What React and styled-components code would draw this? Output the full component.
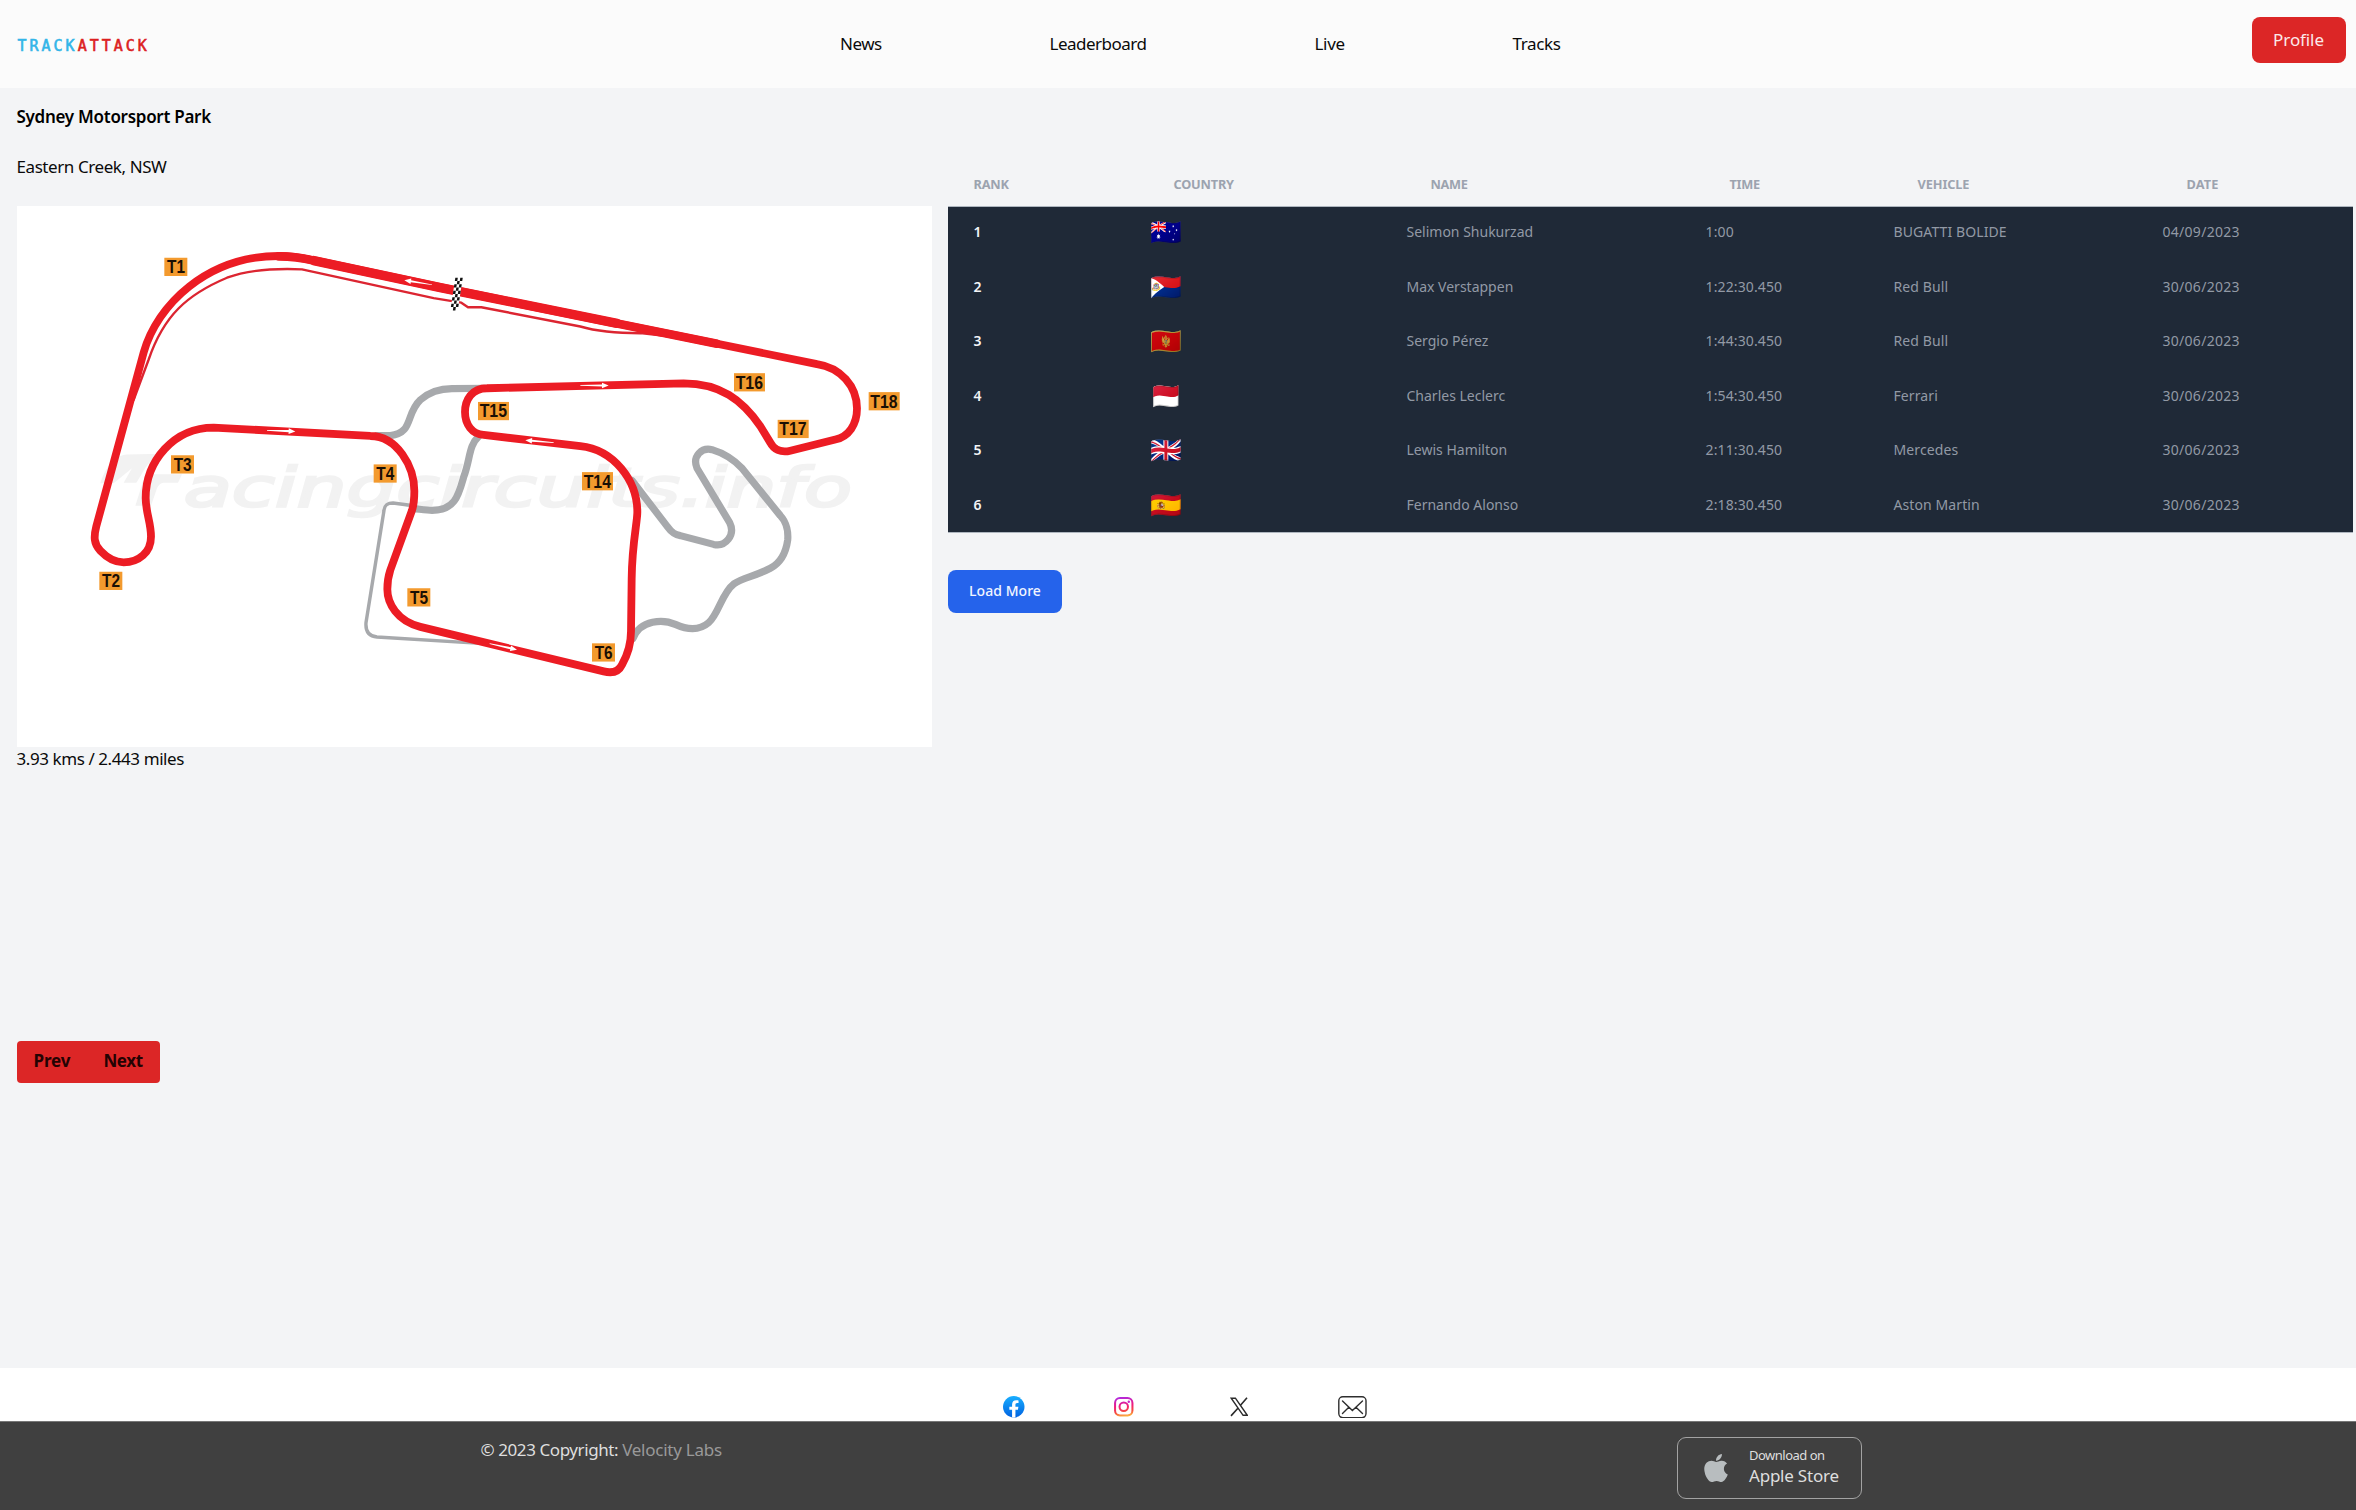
import React from "react";
import styled, { createGlobalStyle } from "styled-components";
import { FaApple } from "react-icons/fa";

const GlobalStyle = createGlobalStyle`
  * { box-sizing: border-box; }
  body { margin: 0; background: #f3f4f6; color: #0a0a0a; font: 17px/26px "Noto Sans", "Open Sans", sans-serif; letter-spacing: -0.42px; }
  button { font: inherit; letter-spacing: inherit; border: 0; padding: 0; cursor: pointer; }
  a { color: inherit; text-decoration: none; }
`;

const Page = styled.div`
  display: flex;
  flex-direction: column;
  height: 1510px;
  overflow: hidden;
`;

const Nav = styled.nav`
  display: flex;
  flex: none;
  height: 88px;
  padding: 17px 10.5px 0 17.5px;
  background: #fbfbfb;
`;

const Logo = styled.a`
  display: flex;
  width: 822.5px;
  padding-top: 16px;
  font: 400 15px/26px "DejaVu Sans Mono", monospace;
  letter-spacing: 3px;
  height: 44px;
  -webkit-text-stroke: 0.6px currentColor;
`;

const LogoPart = styled.span`
  color: ${(p) => p.$color};
`;

const NavLinks = styled.div`
  display: flex;
  flex: 1;
  padding-top: 14px;
`;

const NavLink = styled.a`
  width: ${(p) => p.$width}px;
  letter-spacing: ${(p) => p.$spacing}px;
`;

const ProfileButton = styled.button`
  width: 94px;
  height: 46px;
  padding-bottom: 1px;
  border-radius: 8px;
  background: #dc2626;
  color: #fbe9e9;
  letter-spacing: -0.1px;
`;

const Main = styled.main`
  display: flex;
  flex: none;
  height: 1280px;
`;

const TrackColumn = styled.section`
  display: flex;
  flex-direction: column;
  align-items: flex-start;
  width: 948px;
  padding: 16px 16.5px 0 16.5px;
`;

const TrackTitle = styled.h1`
  margin: 0 0 24px;
  font-size: 17px;
  font-weight: 600;
  letter-spacing: -0.28px;
  color: #000;
`;

const TrackPlace = styled.p`
  margin: 0 0 25.5px;
`;

const MapCard = styled.div`
  width: 915px;
  height: 541px;
  background: #fff;
  svg { display: block; width: 100%; height: 100%; }
`;

const TrackLength = styled.p`
  margin: -1px 0 269.5px;
`;

const Pager = styled.div`
  display: flex;
  gap: 33px;
  width: 143px;
  height: 41.5px;
  padding: 0 17px;
  border-radius: 4px;
  background: #dc2626;
`;

const PagerButton = styled.button`
  background: none;
  padding-bottom: 2px;
  color: #240303;
  font-weight: 700;
  letter-spacing: ${(p) => p.$spacing}px;
`;

const BoardColumn = styled.section`
  width: 1405px;
  padding-top: 75px;
`;

const Row = styled.div`
  display: grid;
  grid-template-columns: 176px 257px 299px 188px 269px 216px;
  align-items: center;
`;

const HeadRow = styled(Row)`
  height: 42.5px;
  color: #9ca3af;
  font-size: 12.75px;
  font-weight: 700;
  text-transform: uppercase;
`;

const HeadCell = styled.div`
  padding-left: ${(p) => (p.$first ? 25.5 : 49.5)}px;
  letter-spacing: ${(p) => p.$spacing}px;
`;

const Rows = styled.div`
  height: 327.5px;
  border: solid #aeb6bf;
  border-width: 1px 0;
  background: #1f2937;
`;

const DataRow = styled(Row)`
  height: 54.5px;
  color: #9299a5;
  font-size: 14px;
  &:first-child { margin-top: -0.75px; }
`;

const Cell = styled.div`
  padding: 0 0 2px 25.5px;
  letter-spacing: ${(p) => p.$spacing || 0}px;
  white-space: nowrap;
`;

const RankCell = styled(Cell)`
  color: #f3f4f6;
  font-weight: 600;
`;

const FlagCell = styled(Cell)`
  padding: 0 0 1.5px 26px;
  font: 25.5px/40px "Noto Color Emoji", "Noto Sans", sans-serif;
`;

const LoadMore = styled.button`
  width: 114px;
  height: 42.5px;
  margin-top: 37px;
  padding-bottom: 1px;
  border-radius: 8px;
  background: #2563eb;
  color: #f1f5ff;
  font-size: 14px;
  font-weight: 500;
  letter-spacing: 0.05px;
`;

const Social = styled.div`
  display: grid;
  flex: none;
  grid-template-columns: 111px 115.5px 108.5px 40px;
  align-items: center;
  height: 53px;
  padding: 25px 0 0 1003px;
  background: #fff;
  a { display: flex; align-items: center; height: 28px; }
`;

const Bottom = styled.footer`
  display: flex;
  flex: 1;
  border-top: 1px solid #777;
  padding-left: 480.5px;
  background: #404040;
`;

const Copyright = styled.p`
  width: 1196px;
  margin: 15px 0 0;
  color: #dedede;
`;

const Company = styled.a`
  color: #999;
  letter-spacing: -0.25px;
`;

const StoreButton = styled.a`
  display: flex;
  align-items: center;
  width: 185px;
  height: 62px;
  margin-top: 15px;
  padding-left: 24px;
  border: 1.5px solid #a3a3a3;
  border-radius: 9px;
  color: #dedede;
  svg { width: 28px; height: 32px; margin-right: 19.5px; color: #b8bdbf; }
`;

const StoreText = styled.div`
  display: flex;
  flex-direction: column;
  padding-bottom: 5px;
  small { font-size: 13px; line-height: 20px; letter-spacing: -0.5px; }
  span { line-height: 22px; letter-spacing: -0.22px; }
`;

const labels = [
  ["T1", 493, 165], ["T2", 298, 1060], ["T3", 513, 728], ["T4", 1121, 754],
  ["T5", 1222, 1107], ["T6", 1776, 1264], ["T14", 1746, 776], ["T15", 1434, 576],
  ["T16", 2202, 494], ["T17", 2333, 627], ["T18", 2606, 548],
];

const arrows = [
  [1295, 242, 1212, 229], [800, 657, 885, 660], [1740, 529, 1825, 529],
  [1660, 692, 1575, 685], [1468, 1265, 1550, 1282],
];

const Line = ({ d, color, width }) => (
  <path d={d} fill="none" stroke={color} strokeWidth={width} strokeLinejoin="round" strokeLinecap="round" vectorEffect="non-scaling-stroke" />
);

function Arrow({ from: [x1, y1, x2, y2] }) {
  const angle = (Math.atan2(y2 - y1, x2 - x1) * 180) / Math.PI;
  const length = Math.hypot(x2 - x1, y2 - y1);
  return (
    <g transform={`translate(${x1} ${y1}) rotate(${angle})`} fill="#fff">
      <path d={`M0 -1 L${length - 20} -3 V-8 L${length} 0 L${length - 20} 8 V3 L0 1Z`} />
    </g>
  );
}

function CircuitMap() {
  const cells = [];
  for (let r = 0; r < 10; r++) for (let c = 0; c < 3; c++) if ((r + c) % 2 === 0) cells.push([c, r]);
  return (
    <svg viewBox="50 17.5 2745 1542" preserveAspectRatio="none">
      <g fill="#f2f2f2">
        <path d="M300 808C320 750 350 728 380 726L485 724C455 738 440 755 425 780L408 806H370L395 765L340 808Z" />
        <path d="M425 808L440 782H545L533 806H490C478 808 472 815 468 828L452 872H405L425 812Z" />
        <text x="550" y="872" fontFamily="DejaVu Sans" fontStyle="italic" fontSize="154" textLength="2005" lengthAdjust="spacingAndGlyphs" letterSpacing="0" stroke="#f2f2f2" strokeWidth="7">acingcircuits.info</text>
      </g>
      <Line color="#a7a9ac" width="7.2" d="M1130 672L1170 672C1240 665 1215 610 1260 570C1290 545 1320 538 1355 538L1460 537" />
      <Line color="#a7a9ac" width="7.2" d="M1435 674C1405 700 1410 740 1390 790C1375 840 1365 885 1295 885C1280 885 1260 882 1240 880" />
      <Line color="#a7a9ac" width="3.4" d="M1240 872L1178 864C1160 864 1153 870 1151 885L1097 1205C1095 1230 1105 1244 1130 1246L1440 1264" />
      <g transform="translate(1320 0)">
        <Line color="#a7a9ac" width="7.2" d="M575 800L680 930C695 950 705 955 720 957L820 982C856 990 886 955 868 920L770 765C755 730 785 705 815 712C850 722 880 740 905 765L1020 900C1040 920 1044 950 1042 970C1036 1010 1020 1035 990 1050C940 1075 910 1075 880 1095C845 1120 835 1180 805 1205C775 1230 740 1225 705 1210C670 1195 600 1195 578 1250" />
      </g>
      <Line color="#dc2531" width="2.4" d="M400 570L445 455C490 330 560 270 680 222C750 197 830 195 905 198L1300 280L1383 293L1403 306L1443 306L1740 361C1790 375 1850 380 1920 380L2000 388" />
      <Line color="#ec1c24" width="7.8" d="M835 160C880 160 905 165 940 173L1320 250L2450 468C2520 478 2570 530 2570 595C2570 640 2545 675 2505 683L2370 715C2340 722 2320 710 2310 692L2280 645C2225 570 2160 523 2050 523L1460 537C1415 537 1394 570 1394 605C1394 640 1415 668 1450 670L1740 702C1840 712 1911 800 1911 890C1911 920 1895 980 1894 1080L1892 1230C1892 1270 1880 1300 1865 1325C1855 1345 1835 1350 1810 1344L1260 1217C1190 1200 1161 1150 1161 1110C1161 1090 1163 1075 1170 1055L1235 885C1242 865 1242 845 1242 830C1242 760 1190 673 1110 673L640 649C520 649 436 745 436 850C436 890 452 920 452 960C452 1005 415 1033 370 1033C345 1033 320 1020 300 1000C280 980 280 960 288 930L430 435C470 300 620 160 835 160Z" />
      <Line color="#ec1c24" width="8.6" d="M835 161C880 161 905 165 940 173L1320 250L2150 410" />
      <Line color="#ec1c24" width="9.4" d="M940 173L1320 250L1850 352" />
      <g transform="translate(1365 222) skewX(-9)">
        <rect width="22" height="93" fill="#fff" />
        {cells.map(([c, r]) => <rect key={`${c}-${r}`} x={c * 7.4} y={r * 9.3} width="7.4" height="9.3" fill="#111" />)}
      </g>
      {arrows.map((a) => <Arrow key={a.join()} from={a} />)}
      {labels.map(([text, x, y]) => {
        const long = text.length > 2;
        return (
          <g key={text}>
            <rect x={x - 1} y={y} width={long ? 93 : 69} height="52" fill="#f39a2e" />
            <text x={x + (long ? 4 : 7)} y={y + 44} fill="#1a0f04" fontFamily="Liberation Sans" fontWeight="700" fontSize="50" letterSpacing="0" textLength={long ? 82 : 54} lengthAdjust="spacingAndGlyphs">{text}</text>
          </g>
        );
      })}
    </svg>
  );
}

const FacebookIcon = () => (
  <svg width="21.5" height="21.5" viewBox="0 0 24 24">
    <defs><linearGradient id="fb" x2="0" y2="1"><stop stopColor="#19aeff" /><stop offset="1" stopColor="#0062e0" /></linearGradient></defs>
    <circle cx="12" cy="12" r="12" fill="url(#fb)" />
    <path fill="#fff" d="M16.671 15.469l.532-3.469h-3.328V9.75c0-.949.465-1.874 1.956-1.874h1.513V4.922s-1.374-.234-2.686-.234c-2.741 0-4.533 1.662-4.533 4.669V12H7.078v3.469h3.047v8.385a12.1 12.1 0 003.75 0v-8.385z" />
  </svg>
);

const InstagramIcon = () => (
  <svg width="19.5" height="19.5" viewBox="0 0 24 24" fill="none" stroke="url(#ig)">
    <defs><linearGradient id="ig" gradientUnits="userSpaceOnUse" x1="9" y1="0" x2="13" y2="24"><stop stopColor="#b02ae0" /><stop offset=".45" stopColor="#ee1c80" /><stop offset=".75" stopColor="#f5483f" /><stop offset="1" stopColor="#fdb540" /></linearGradient></defs>
    <rect x="1.3" y="1.3" width="21.4" height="21.4" rx="6" strokeWidth="2.5" />
    <circle cx="12" cy="12" r="5.2" strokeWidth="2.5" />
    <circle cx="18.2" cy="5.8" r="1.5" fill="#c226c8" stroke="none" />
  </svg>
);

const XIcon = () => (
  <svg width="18.5" height="19.5" viewBox="0 0 18.5 19.5" fill="none" stroke="#2b2b2b">
    <path strokeWidth="1.4" d="M1.2 1.2H5.4L17.3 18.3H13.1Z" />
    <path strokeWidth="1.6" d="M17 .8L10.3 8.5M7.9 11.2L1 18.9" />
  </svg>
);

const MailIcon = () => (
  <svg width="29" height="22.5" viewBox="0 0 29 22.5" fill="none" stroke="#2e2e2e" strokeWidth="1.4" strokeLinecap="round">
    <rect x=".8" y=".8" width="27.2" height="20.8" rx="4" />
    <path d="M4.5 5L14.4 14.5L24.5 5M4.5 17.5L10.8 11.3M24.5 17.5L18 11.3" />
  </svg>
);

const heads = [["Rank", -0.2], ["Country", -0.2], ["Name", -0.35], ["Time", -0.25], ["Vehicle", -0.1], ["Date", 0.1]];

const results = [
  ["1", "🇦🇺", "Selimon Shukurzad", "1:00", "BUGATTI BOLIDE", "04/09/2023"],
  ["2", "🇸🇽", "Max Verstappen", "1:22:30.450", "Red Bull", "30/06/2023"],
  ["3", "🇲🇪", "Sergio Pérez", "1:44:30.450", "Red Bull", "30/06/2023"],
  ["4", "🇲🇨", "Charles Leclerc", "1:54:30.450", "Ferrari", "30/06/2023"],
  ["5", "🇬🇧", "Lewis Hamilton", "2:11:30.450", "Mercedes", "30/06/2023"],
  ["6", "🇪🇸", "Fernando Alonso", "2:18:30.450", "Aston Martin", "30/06/2023"],
];

export default function App() {
  return (
    <Page>
      <GlobalStyle />
      <Nav>
        <Logo><LogoPart $color="#33b5e8">TRACK</LogoPart><LogoPart $color="#dc1f1f">ATTACK</LogoPart></Logo>
        <NavLinks>
          <NavLink $width={209.5} $spacing={-0.5}>News</NavLink>
          <NavLink $width={265} $spacing={-0.5}>Leaderboard</NavLink>
          <NavLink $width={198} $spacing={-0.3}>Live</NavLink>
          <NavLink $width={60} $spacing={-0.35}>Tracks</NavLink>
        </NavLinks>
        <ProfileButton>Profile</ProfileButton>
      </Nav>
      <Main>
        <TrackColumn>
          <TrackTitle>Sydney Motorsport Park</TrackTitle>
          <TrackPlace>Eastern Creek, NSW</TrackPlace>
          <MapCard><CircuitMap /></MapCard>
          <TrackLength>3.93 kms / 2.443 miles</TrackLength>
          <Pager>
            <PagerButton $spacing={-0.1}>Prev</PagerButton>
            <PagerButton $spacing={-0.4}>Next</PagerButton>
          </Pager>
        </TrackColumn>
        <BoardColumn>
          <HeadRow>
            {heads.map(([name, spacing], i) => <HeadCell key={name} $first={i === 0} $spacing={spacing}>{name}</HeadCell>)}
          </HeadRow>
          <Rows>
            {results.map(([rank, flag, name, time, vehicle, date]) => (
              <DataRow key={rank}>
                <RankCell>{rank}</RankCell>
                <FlagCell>{flag}</FlagCell>
                <Cell>{name}</Cell>
                <Cell $spacing={0.12}>{time}</Cell>
                <Cell $spacing={0.1}>{vehicle}</Cell>
                <Cell $spacing={0.28}>{date}</Cell>
              </DataRow>
            ))}
          </Rows>
          <LoadMore>Load More</LoadMore>
        </BoardColumn>
      </Main>
      <Social>
        <a><FacebookIcon /></a>
        <a><InstagramIcon /></a>
        <a><XIcon /></a>
        <a><MailIcon /></a>
      </Social>
      <Bottom>
        <Copyright>© 2023 Copyright: <Company>Velocity Labs</Company></Copyright>
        <StoreButton>
          <FaApple />
          <StoreText><small>Download on</small><span>Apple Store</span></StoreText>
        </StoreButton>
      </Bottom>
    </Page>
  );
}
